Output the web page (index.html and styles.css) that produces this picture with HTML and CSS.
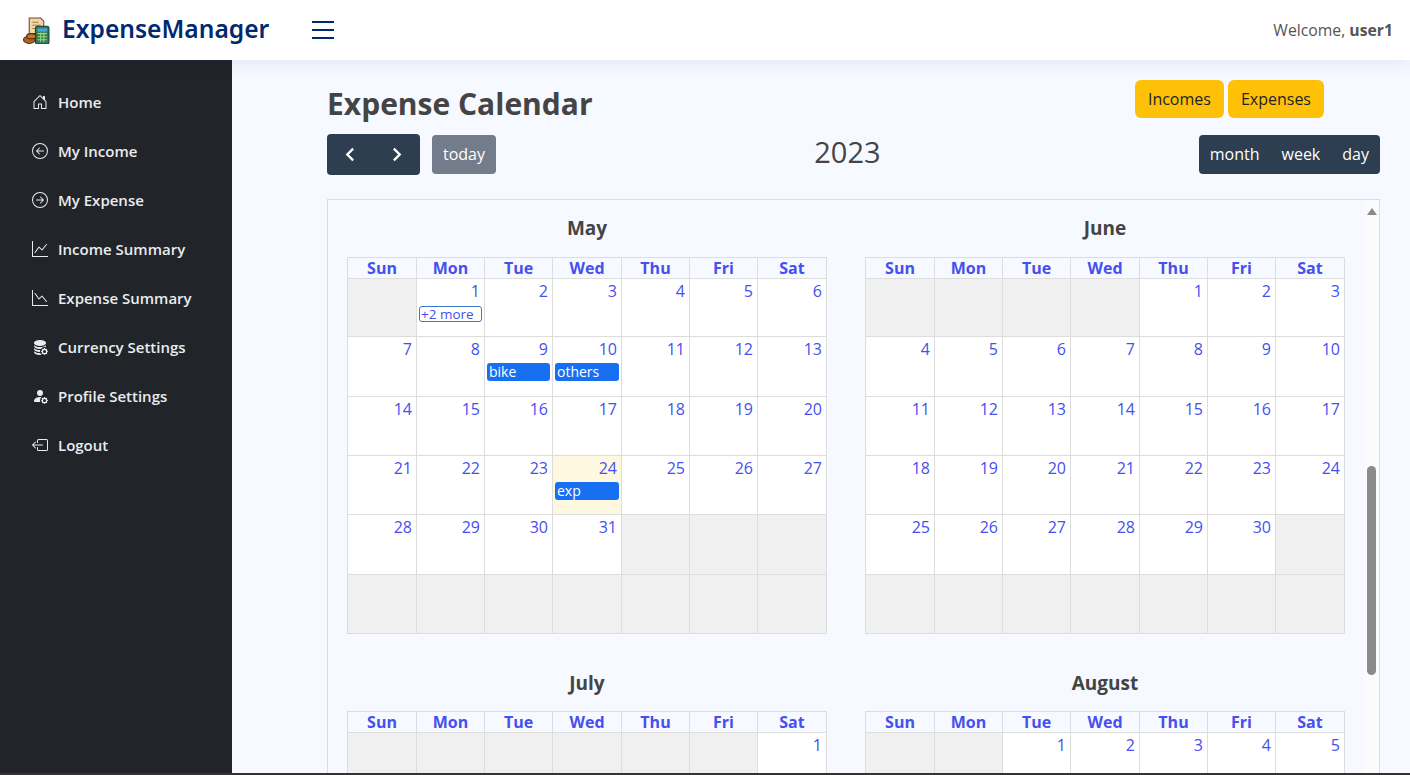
FILE: index.html
```html
<!DOCTYPE html>
<html>
<head>
    <title>Expense Calendar</title>
    <link rel="stylesheet" href="styles.css">
</head>

<body>
    <svg class="defs" width="0" height="0">
        <symbol id="gear" viewBox="0 0 16 16"><path d="M11.886 9.46c.18-.613 1.048-.613 1.229 0l.043.148a.64.64 0 0 0 .921.382l.136-.074c.561-.306 1.175.308.87.869l-.075.136a.64.64 0 0 0 .382.92l.149.045c.612.18.612 1.048 0 1.229l-.15.043a.64.64 0 0 0-.38.921l.074.136c.305.561-.309 1.175-.87.87l-.136-.075a.64.64 0 0 0-.92.382l-.045.149c-.18.612-1.048.612-1.229 0l-.043-.15a.64.64 0 0 0-.921-.38l-.136.074c-.561.305-1.175-.309-.87-.87l.075-.136a.64.64 0 0 0-.382-.92l-.148-.045c-.613-.18-.613-1.048 0-1.229l.148-.043a.64.64 0 0 0 .382-.921l-.074-.136c-.306-.561.308-1.175.869-.87l.136.075a.64.64 0 0 0 .92-.382l.045-.149zM14 12.5a1.5 1.5 0 1 0-3 0 1.5 1.5 0 0 0 3 0z"/></symbol>
    </svg>

    <header class="topbar">
        <div class="brand">
            <svg class="logo" viewBox="0 0 26 26">
                <path d="M6 1h11l3 3v12H6z" fill="#f3d6a8" stroke="#6b4a26" stroke-width="1"/>
                <path d="M9 5h6M9 8h8M9 11h6" stroke="#a9783f" stroke-width="1"/>
                <rect x="12" y="9" width="13" height="17" rx="2" fill="#2f7d5b" stroke="#1d3d33" stroke-width="1"/>
                <rect x="14" y="11" width="9" height="3" fill="#4aa6de"/>
                <path d="M14 16h9M14 19h9M14 22h9M17 15v9M20 15v9" stroke="#a5d66a" stroke-width="1"/>
                <ellipse cx="6" cy="22" rx="5.5" ry="3.5" fill="#b5611d" stroke="#4a2b10" stroke-width="1"/>
                <ellipse cx="8" cy="18.500" rx="4.500" ry="2.500" fill="#c9772b" stroke="#4a2b10" stroke-width="1"/>
            </svg>
            <span class="brand-name">ExpenseManager</span>
        </div>
        <button class="burger"><span></span><span></span><span></span></button>
        <div class="welcome">Welcome, <b>user1</b></div>
    </header>

    <div class="page">
        <nav class="sidebar">
            <a class="nav-item" href="#">
                <svg viewBox="0 0 16 16"><path d="M8.354 1.146a.5.5 0 0 0-.708 0l-6 6A.5.5 0 0 0 1.500 7.500v7a.5.5 0 0 0 .5.5h4.500a.5.5 0 0 0 .5-.5v-4h2v4a.5.5 0 0 0 .5.5H14a.5.5 0 0 0 .5-.5v-7a.5.5 0 0 0-.146-.354L13 5.793V2.500a.5.5 0 0 0-.5-.5h-1a.5.5 0 0 0-.5.5v1.293L8.354 1.146zM2.500 14V7.707l5.500-5.500 5.500 5.500V14H10v-4a.5.5 0 0 0-.5-.5h-3a.5.5 0 0 0-.5.5v4H2.500z"/></svg>
                Home
            </a>
            <a class="nav-item" href="#">
                <svg viewBox="0 0 16 16"><path d="M1 8a7 7 0 1 0 14 0A7 7 0 0 0 1 8zm15 0A8 8 0 1 1 0 8a8 8 0 0 1 16 0zm-4.500-.5a.5.5 0 0 1 0 1H5.707l2.147 2.146a.5.5 0 0 1-.708.708l-3-3a.5.5 0 0 1 0-.708l3-3a.5.5 0 1 1 .708.708L5.707 7.500H11.500z"/></svg>
                My Income
            </a>
            <a class="nav-item" href="#">
                <svg viewBox="0 0 16 16"><path d="M1 8a7 7 0 1 0 14 0A7 7 0 0 0 1 8zm15 0A8 8 0 1 1 0 8a8 8 0 0 1 16 0zM4.500 7.500a.5.5 0 0 0 0 1h5.793l-2.147 2.146a.5.5 0 0 0 .708.708l3-3a.5.5 0 0 0 0-.708l-3-3a.5.5 0 1 0-.708.708L10.293 7.500H4.500z"/></svg>
                My Expense
            </a>
            <a class="nav-item" href="#">
                <svg viewBox="0 0 16 16"><path d="M0 0h1v15h15v1H0V0zm14.817 3.113a.5.5 0 0 1 .07.704l-4.500 5.500a.5.5 0 0 1-.74.037L7.060 6.767l-3.656 5.027a.5.5 0 0 1-.808-.588l4-5.500a.5.5 0 0 1 .758-.06l2.609 2.610 4.150-5.073a.5.5 0 0 1 .704-.07z"/></svg>
                Income Summary
            </a>
            <a class="nav-item" href="#">
                <svg viewBox="0 0 16 16"><path d="M0 0h1v15h15v1H0V0zm14.817 11.887a.5.5 0 0 0 .07-.704l-4.500-5.500a.5.5 0 0 0-.74-.037L7.060 8.233 3.404 3.206a.5.5 0 0 0-.808.588l4 5.500a.5.5 0 0 0 .758.06l2.609-2.610 4.150 5.073a.5.5 0 0 0 .704.07z"/></svg>
                Expense Summary
            </a>
            <a class="nav-item" href="#">
                <svg viewBox="0 0 16 16"><path d="M8 1c-1.573 0-3.022.289-4.096.777C2.875 2.245 2 2.993 2 4s.875 1.755 1.904 2.223C4.978 6.711 6.427 7 8 7s3.022-.289 4.096-.777C13.125 5.755 14 5.007 14 4s-.875-1.755-1.904-2.223C11.022 1.289 9.573 1 8 1z"/><path d="M2 7v-.839c.457.432 1.004.751 1.490.972C4.722 7.693 6.318 8 8 8s3.278-.307 4.510-.867c.486-.22 1.033-.54 1.490-.972V7c0 .424-.155.802-.411 1.133a4.510 4.510 0 0 0-4.815 1.843A12.310 12.310 0 0 1 8 10c-1.573 0-3.022-.289-4.096-.777C2.875 8.755 2 8.007 2 7zm6.257 3.998L8 11c-1.682 0-3.278-.307-4.510-.867-.486-.22-1.033-.54-1.490-.972V10c0 1.007.875 1.755 1.904 2.223C4.978 12.711 6.427 13 8 13h.027a4.552 4.552 0 0 1 .23-2.002zm-.002 3L8 14c-1.682 0-3.278-.307-4.510-.867-.486-.22-1.033-.54-1.490-.972V13c0 1.007.875 1.755 1.904 2.223C4.978 15.711 6.427 16 8 16c.536 0 1.058-.034 1.555-.097a4.507 4.507 0 0 1-1.300-1.905z"/><use href="#gear"/></svg>
                Currency Settings
            </a>
            <a class="nav-item" href="#">
                <svg viewBox="0 0 16 16"><path d="M11 5a3 3 0 1 1-6 0 3 3 0 0 1 6 0zm-9 8c0 1 1 1 1 1h5.256A4.493 4.493 0 0 1 8 12.500a4.490 4.490 0 0 1 1.544-3.393C9.077 9.038 8.564 9 8 9c-5 0-6 3-6 4z"/><use href="#gear"/></svg>
                Profile Settings
            </a>
            <a class="nav-item" href="#">
                <svg viewBox="0 0 16 16"><path d="M6 12.500a.5.5 0 0 0 .5.5h8a.5.5 0 0 0 .5-.5v-9a.5.5 0 0 0-.5-.5h-8a.5.5 0 0 0-.5.5v2a.5.5 0 0 1-1 0v-2A1.500 1.500 0 0 1 6.500 2h8A1.500 1.500 0 0 1 16 3.500v9a1.500 1.500 0 0 1-1.500 1.500h-8A1.500 1.500 0 0 1 5 12.500v-2a.5.5 0 0 1 1 0v2z"/><path d="M.146 8.354a.5.5 0 0 1 0-.708l3-3a.5.5 0 1 1 .708.708L1.707 7.500H10.500a.5.5 0 0 1 0 1H1.707l2.147 2.146a.5.5 0 0 1-.708.708l-3-3z"/></svg>
                Logout
            </a>
        </nav>

        <main class="main">
            <div class="title-row">
                <h1>Expense Calendar</h1>
                <div class="switch">
                    <button class="btn-yellow">Incomes</button>
                    <button class="btn-yellow">Expenses</button>
                </div>
            </div>

            <div class="toolbar">
                <div class="toolbar-left">
                    <div class="btn-group nav-group">
                        <button class="btn-dark"><svg viewBox="0 0 16 16"><path d="M10.500 2.500 5 8l5.500 5.500"/></svg></button>
                        <button class="btn-dark"><svg viewBox="0 0 16 16"><path d="M5.500 2.500 11 8l-5.500 5.500"/></svg></button>
                    </div>
                    <button class="btn-today">today</button>
                </div>
                <h2 class="year">2023</h2>
                <div class="btn-group">
                    <button class="btn-dark">month</button>
                    <button class="btn-dark">week</button>
                    <button class="btn-dark">day</button>
                </div>
            </div>

            <section class="calendar">
                <div class="months">
                    <div class="month">
                        <h3>May</h3>
                        <table>
                            <tr><th>Sun</th><th>Mon</th><th>Tue</th><th>Wed</th><th>Thu</th><th>Fri</th><th>Sat</th></tr>
                            <tr><td class="off"></td><td>1<a class="more">+2 more</a></td><td>2</td><td>3</td><td>4</td><td>5</td><td>6</td></tr>
                            <tr><td>7</td><td>8</td><td>9<a class="event">bike</a></td><td>10<a class="event">others</a></td><td>11</td><td>12</td><td>13</td></tr>
                            <tr><td>14</td><td>15</td><td>16</td><td>17</td><td>18</td><td>19</td><td>20</td></tr>
                            <tr><td>21</td><td>22</td><td>23</td><td class="today">24<a class="event">exp</a></td><td>25</td><td>26</td><td>27</td></tr>
                            <tr><td>28</td><td>29</td><td>30</td><td>31</td><td class="off"></td><td class="off"></td><td class="off"></td></tr>
                            <tr><td class="off"></td><td class="off"></td><td class="off"></td><td class="off"></td><td class="off"></td><td class="off"></td><td class="off"></td></tr>
                        </table>
                    </div>
                    <div class="month">
                        <h3>June</h3>
                        <table>
                            <tr><th>Sun</th><th>Mon</th><th>Tue</th><th>Wed</th><th>Thu</th><th>Fri</th><th>Sat</th></tr>
                            <tr><td class="off"></td><td class="off"></td><td class="off"></td><td class="off"></td><td>1</td><td>2</td><td>3</td></tr>
                            <tr><td>4</td><td>5</td><td>6</td><td>7</td><td>8</td><td>9</td><td>10</td></tr>
                            <tr><td>11</td><td>12</td><td>13</td><td>14</td><td>15</td><td>16</td><td>17</td></tr>
                            <tr><td>18</td><td>19</td><td>20</td><td>21</td><td>22</td><td>23</td><td>24</td></tr>
                            <tr><td>25</td><td>26</td><td>27</td><td>28</td><td>29</td><td>30</td><td class="off"></td></tr>
                            <tr><td class="off"></td><td class="off"></td><td class="off"></td><td class="off"></td><td class="off"></td><td class="off"></td><td class="off"></td></tr>
                        </table>
                    </div>
                    <div class="month">
                        <h3>July</h3>
                        <table>
                            <tr><th>Sun</th><th>Mon</th><th>Tue</th><th>Wed</th><th>Thu</th><th>Fri</th><th>Sat</th></tr>
                            <tr><td class="off"></td><td class="off"></td><td class="off"></td><td class="off"></td><td class="off"></td><td class="off"></td><td>1</td></tr>
                        </table>
                    </div>
                    <div class="month">
                        <h3>August</h3>
                        <table>
                            <tr><th>Sun</th><th>Mon</th><th>Tue</th><th>Wed</th><th>Thu</th><th>Fri</th><th>Sat</th></tr>
                            <tr><td class="off"></td><td class="off"></td><td>1</td><td>2</td><td>3</td><td>4</td><td>5</td></tr>
                        </table>
                    </div>
                </div>
                <div class="scrollbar">
                    <span class="scroll-up"></span>
                    <span class="scroll-thumb"></span>
                </div>
            </section>
        </main>
    </div>
    <div class="bottom-strip"></div>
</body>

</html>
```

FILE: styles.css
```css
* {
    box-sizing: border-box;
}
html, body {
    height: 100%;
}
body {
    font-family: "Open Sans", sans-serif;
    margin: 0;
    display: flex;
    flex-direction: column;
    overflow: hidden;
    background-color: #f6f9ff;
    color: #444;
}
button {
    font-family: inherit;
    border: none;
    cursor: pointer;
}
.defs {
    position: absolute;
}

/* top bar */
.topbar {
    flex: none;
    height: 60px;
    display: flex;
    align-items: center;
    padding: 0 17px 0 23px;
    background-color: #fff;
    box-shadow: 0 2px 20px rgba(1, 41, 112, 0.1);
    position: relative;
    z-index: 2;
}
.brand {
    display: flex;
    align-items: center;
    gap: 12px;
    width: 289px;
}
.logo {
    width: 27px;
    height: 27px;
}
.brand-name {
    font-family: "Noto Sans", sans-serif;
    font-size: 24.600px;
    font-weight: 600;
    color: #012970;
    margin-bottom: 4px;
}
.burger {
    width: 22px;
    height: 18px;
    padding: 0;
    background: none;
    display: flex;
    flex-direction: column;
    justify-content: space-between;
}
.burger span {
    display: block;
    height: 2px;
    background-color: #012970;
}
.welcome {
    margin-left: auto;
    font-size: 15.750px;
    color: #555;
}

/* page */
.page {
    flex: 1;
    min-height: 0;
    display: flex;
}
.sidebar {
    flex: none;
    width: 232px;
    padding-top: 17px;
    background-color: #212529;
}
.nav-item {
    height: 49px;
    display: flex;
    align-items: center;
    gap: 10px;
    padding-left: 32px;
    font-size: 15px;
    font-weight: 600;
    color: #e9ecef;
    text-decoration: none;
}
.nav-item svg {
    width: 16px;
    height: 16px;
    fill: #e9ecef;
}
.main {
    flex: 1;
    min-width: 0;
    display: flex;
    flex-direction: column;
    padding: 20px 30px 0 95px;
}
.title-row {
    display: flex;
    justify-content: space-between;
    height: 38px;
    padding-right: 56px;
}
h1 {
    margin: 4px 0 0;
    font-size: 30px;
    line-height: 40px;
    font-weight: 700;
    color: #444;
}
.switch {
    display: flex;
    gap: 4px;
}
.btn-yellow {
    height: 38px;
    padding: 0 13px;
    font-size: 16px;
    color: #212529;
    background-color: #ffc107;
    border-radius: 6px;
}
.toolbar {
    display: flex;
    justify-content: space-between;
    align-items: center;
    margin-top: 16px;
    height: 41px;
}
.toolbar-left {
    display: flex;
    align-items: center;
    gap: 12px;
}
.btn-group {
    display: flex;
    height: 39px;
    background-color: #2c3e50;
    border-radius: 4px;
    overflow: hidden;
}
.nav-group {
    height: 41px;
    width: 93px;
}
.btn-dark {
    padding: 0 11px 2px;
    font-size: 16px;
    color: #fff;
    background: none;
}
.nav-group .btn-dark {
    flex: 1;
    padding: 0;
    display: flex;
    align-items: center;
    justify-content: center;
}
.nav-group svg {
    width: 17px;
    height: 17px;
    fill: none;
    stroke: #fff;
    stroke-width: 2.200;
}
.btn-today {
    height: 39px;
    padding: 0 11px 2px;
    font-size: 16px;
    color: #fff;
    background-color: #727c8a;
    border-radius: 4px;
}
.year {
    margin: 0 0 6px;
    font-size: 29px;
    font-weight: 400;
    color: #444;
}

/* calendar */
.calendar {
    flex: 1;
    min-height: 0;
    display: flex;
    justify-content: space-between;
    margin-top: 24px;
    border: 1px solid #ddd;
    border-bottom: none;
    overflow: hidden;
}
.months {
    display: grid;
    grid-template-columns: 480px 480px;
    column-gap: 38px;
    align-content: start;
    padding: 14px 0 0 19px;
}
.month {
    height: 454.500px;
}
.month h3 {
    margin: 0;
    height: 43px;
    font-size: 19px;
    line-height: 28px;
    font-weight: 700;
    text-align: center;
    color: #444;
}
.month:nth-child(n+3) h3 {
    height: 42px;
}
table {
    width: 480px;
    table-layout: fixed;
    border-collapse: collapse;
}
th, td {
    border: 1px solid #ddd;
    padding: 0;
}
th {
    width: 68px;
    height: 20px;
    font-size: 16px;
    line-height: 20px;
    font-weight: 700;
    color: #4650ee;
}
th:nth-child(1), th:nth-child(4), th:nth-child(7) {
    width: 69px;
}
td {
    height: 59px;
    padding: 1px 4px 0 2px;
    vertical-align: top;
    text-align: right;
    font-size: 16px;
    line-height: 22px;
    color: #4650ee;
    background-color: #fff;
}
tr:nth-child(2) td {
    height: 58px;
}
tr:nth-child(3) td, tr:nth-child(6) td {
    height: 60px;
}
td.off {
    background-color: #f0f0f0;
}
td.today {
    background-color: #fff8e1;
}
.event, .more {
    display: block;
    margin-right: -2px;
    text-align: left;
    font-size: 14px;
    border-radius: 3px;
    padding-left: 2px;
}
.event {
    height: 18px;
    margin-top: 3px;
    line-height: 18px;
    color: #fff;
    background-color: #176ff2;
}
.more {
    height: 16px;
    margin-top: 4px;
    line-height: 14px;
    font-size: 13.500px;
    padding-left: 1px;
    border: 1px solid #3a78c9;
    background-color: #fff;
}
.scrollbar {
    flex: none;
    width: 15px;
    position: relative;
    background-color: #fbfbfb;
}
.scroll-up {
    position: absolute;
    top: 8px;
    left: 3px;
    border-left: 5px solid transparent;
    border-right: 5px solid transparent;
    border-bottom: 7px solid #8a8a8a;
}
.scroll-thumb {
    position: absolute;
    top: 266px;
    left: 3px;
    width: 9px;
    height: 209px;
    border-radius: 5px;
    background-color: #8a8a8a;
}
.bottom-strip {
    flex: none;
    height: 2px;
    background-color: #333;
}
```
